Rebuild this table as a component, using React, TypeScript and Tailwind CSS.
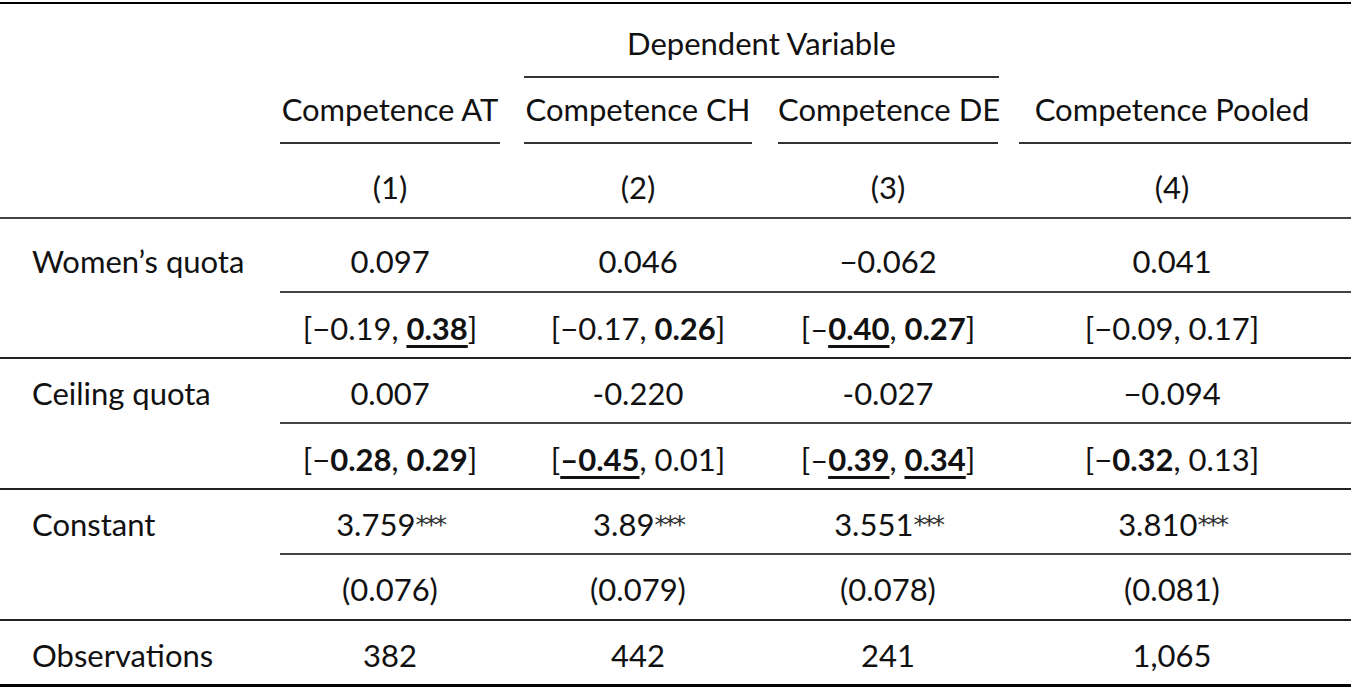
import type { ReactNode } from "react";

const cellCls = [
  "w-[220px] shrink-0 whitespace-nowrap text-center",
  "ml-[24px] w-[228px] shrink-0 whitespace-nowrap text-center",
  "ml-[26px] w-[220px] shrink-0 whitespace-nowrap text-center",
  "ml-[21px] flex-1 whitespace-nowrap pr-[26px] text-center",
];

function Cells({ items }: { items: ReactNode[] }) {
  return (
    <div className="flex">
      {items.map((it, i) => (
        <div key={i} className={cellCls[i]}>
          {it}
        </div>
      ))}
    </div>
  );
}

const B = ({ children }: { children: ReactNode }) => <span className="font-bold">{children}</span>;
const BU = ({ children }: { children: ReactNode }) => (
  <span className="font-bold underline decoration-[2.5px] underline-offset-[5px]">{children}</span>
);
const Stars = () => (
  <span className="relative -top-[3px] font-['DejaVu_Sans',sans-serif] text-[25px] font-normal tracking-[-3px] text-[#333]">***</span>
);

type Group = { label: string; rows: ReactNode[][]; heights: string[] };

const groups: Group[] = [
  {
    label: "Women’s quota",
    heights: ["h-[72px] pt-[26px]", "h-[64px] pt-[19px]"],
    rows: [
      ["0.097", "0.046", "−0.062", "0.041"],
      [
        <>[−0.19, <BU>0.38</BU>]</>,
        <>[−0.17, <B>0.26</B>]</>,
        <>[–<BU>0.40</BU>, <B>0.27</B>]</>,
        <>[−0.09, 0.17]</>,
      ],
    ],
  },
  {
    label: "Ceiling quota",
    heights: ["h-[63px] pt-[18px]", "h-[64px] pt-[19px]"],
    rows: [
      ["0.007", "-0.220", "-0.027", "−0.094"],
      [
        <>[−<B>0.28</B>, <B>0.29</B>]</>,
        <>[<BU>–0.45</BU>, 0.01]</>,
        <>[–<BU>0.39</BU>, <BU>0.34</BU>]</>,
        <>[−<B>0.32</B>, 0.13]</>,
      ],
    ],
  },
  {
    label: "Constant",
    heights: ["h-[63px] pt-[18px]", "h-[64px] pt-[18px]"],
    rows: [
      [
        <>3.759<Stars /></>,
        <>3.89<Stars /></>,
        <>3.551<Stars /></>,
        <>3.810<Stars /></>,
      ],
      ["(0.076)", "(0.079)", "(0.078)", "(0.081)"],
    ],
  },
];

export default function App() {
  return (
    <div className="h-[688px] w-[1351px] overflow-hidden bg-white text-[31px] leading-[32px] text-[#111]" style={{ fontFamily: "Lato, 'Noto Sans', sans-serif" }}>
      <div className="mt-[2px] h-[2px] bg-black" />

      {/* header */}
      <div className="flex h-[72px] pt-[23px]">
        <div className="w-[280px] shrink-0" />
        <div className="ml-[220px] pl-[24px] w-[499px] text-center">Dependent Variable</div>
      </div>
      <div className="flex">
        <div className="w-[280px] shrink-0" />
        <div className="ml-[244px] h-[2px] w-[475px] bg-[#333]" />
      </div>
      <div className="flex h-[64px] pt-[15px]">
        <div className="w-[280px] shrink-0" />
        <div className="flex-1">
          <Cells items={["Competence AT", "Competence CH", "Competence DE", "Competence Pooled"]} />
        </div>
      </div>
      <div className="flex">
        <div className="w-[280px] shrink-0" />
        <div className="flex-1">
          <Cells items={[0, 1, 2, 3].map((i) => <div key={i} className={i === 3 ? "-mr-[26px] h-[2px] bg-[#333]" : "h-[2px] bg-[#333]"} />)} />
        </div>
      </div>
      <div className="flex h-[73px] pt-[27px]">
        <div className="w-[280px] shrink-0" />
        <div className="flex-1">
          <Cells items={["(1)", "(2)", "(3)", "(4)"]} />
        </div>
      </div>
      <div className="h-[2px] bg-[#444]" />

      {/* body */}
      {groups.map((g) => (
        <div key={g.label}>
          <div className="flex">
            <div className={"w-[280px] shrink-0 pl-[32px] " + g.heights[0].split(" ")[1]}>{g.label}</div>
            <div className="flex-1">
              <div className={g.heights[0]}>
                <Cells items={g.rows[0]} />
              </div>
              <div className="h-[2px] bg-[#444]" />
              <div className={g.heights[1]}>
                <Cells items={g.rows[1]} />
              </div>
            </div>
          </div>
          <div className="h-[2px] bg-[#222]" />
        </div>
      ))}

      <div className="flex h-[63px] pt-[18px]">
        <div className="w-[280px] shrink-0 pl-[32px]">Observations</div>
        <div className="flex-1">
          <Cells items={["382", "442", "241", "1,065"]} />
        </div>
      </div>
      <div className="h-[3px] bg-black" />
    </div>
  );
}
